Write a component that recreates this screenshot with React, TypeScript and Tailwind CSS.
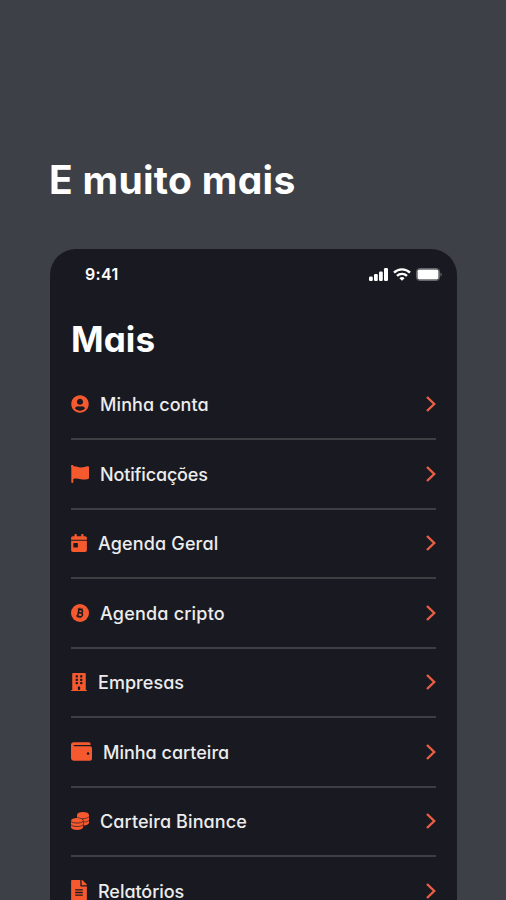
import clsx from "clsx"
import type { IconType } from "react-icons"
import {
  FaBuilding,
  FaCalendarDay,
  FaFileAlt,
  FaUserCircle,
  FaWallet,
} from "react-icons/fa"

type IconProps = { className?: string }

function FlagIcon({ className }: IconProps) {
  return (
    <svg className={className} viewBox="0 0 18 18" fill="currentColor">
      <path d="M0 1.2C0 .5.5 0 1.2 0c.8 0 1.2.5 1.3 1.2C5 .9 7 2.300 9.500 2.500c3 .1 5-.8 7.200-1.200.8-.2 1.300.2 1.300.9v10.800c0 .5-.3.8-.8.9-2.500.5-4.500.9-7.200.4-3-.6-5-1.100-7.700-.4v3.200c0 .5-.4.900-.9.900h-.2c-.5 0-.9-.4-.9-.9V2.500C.2 2.200 0 1.800 0 1.200Z" />
    </svg>
  )
}

function BitcoinIcon({ className }: IconProps) {
  return (
    <svg className={className} viewBox="0 0 18 18" fill="none">
      <circle cx="9" cy="9" r="9" fill="currentColor" />
      <g stroke="#191a21" strokeWidth="1.5" transform="rotate(12 9 9)">
        <path d="M6 5.500h3.500a1.600 1.600 0 0 1 0 3.300H7.300h2.700a1.800 1.800 0 0 1 0 3.700H6M7.300 5.500v7" />
        <path d="M8 3.800v1.700M10 3.800v1.700M8 12.500v1.700M10 12.500v1.700" strokeWidth="1" />
      </g>
    </svg>
  )
}

function CoinsIcon({ className }: IconProps) {
  return (
    <svg className={className} viewBox="0 0 18 18">
      <path d="M6 3v10.500h8c2.500-.5 4-1.500 4-2.700V3Z" fill="currentColor" />
      <ellipse cx="12" cy="2.900" rx="6" ry="2.900" fill="currentColor" />
      <path d="M11 6.500c3.500.2 6-.6 7-1.800M12.500 10.100c2.500-.1 4.500-.7 5.500-1.700" fill="none" stroke="#191a21" strokeWidth=".6" />
      <path d="M-.4 8.500c0-1.800 2.800-3.100 6.400-3.100s6.600 1.300 6.600 3.100V18h-13Z" fill="#191a21" />
      <path d="M0 8.800C0 7.100 2.700 5.900 6 5.900s6.100 1.200 6.100 2.900v6.300C12.100 16.800 9.300 18 6 18s-6-1.200-6-2.900Z" fill="currentColor" />
      <path d="M0 9.400c2 2.200 10 2.200 12 0M0 12.900c2 2.200 10 2.200 12 0" fill="none" stroke="#191a21" strokeWidth=".7" />
    </svg>
  )
}

type MenuItem = {
  label: string
  icon: IconType | typeof FlagIcon
  iconClass: string
  labelClass: string
}

const items: MenuItem[] = [
  { label: "Minha conta", icon: FaUserCircle, iconClass: "w-[18px] h-[18px]", labelClass: "tracking-[0.1px]" },
  { label: "Notificações", icon: FlagIcon, iconClass: "w-[18px] h-[18px]", labelClass: "tracking-[-0.15px]" },
  { label: "Agenda Geral", icon: FaCalendarDay, iconClass: "w-4 h-[18px]", labelClass: "tracking-[0.15px]" },
  { label: "Agenda cripto", icon: BitcoinIcon, iconClass: "w-[18px] h-[18px]", labelClass: "tracking-[0.2px]" },
  { label: "Empresas", icon: FaBuilding, iconClass: "w-4 h-[18px]", labelClass: "tracking-[0.05px]" },
  { label: "Minha carteira", icon: FaWallet, iconClass: "w-[21px] h-[21px]", labelClass: "" },
  { label: "Carteira Binance", icon: CoinsIcon, iconClass: "w-[18px] h-[18px]", labelClass: "tracking-[0.1px]" },
  { label: "Relatórios", icon: FaFileAlt, iconClass: "w-4 h-[21px]", labelClass: "-tracking-[0.05px]" },
]

function StatusBar() {
  return (
    <div className="flex h-[50px] items-center justify-between pl-[35px] pr-[15px] text-white">
      <span className="text-[16px] font-semibold leading-none tracking-[0.3px]">9:41</span>
      <div className="flex items-center gap-[5px]">
        <svg className="h-[13px] w-[19px]" viewBox="0 0 19 13" fill="currentColor">
          <rect x="0" y="8.5" width="3.8" height="4.5" rx="1.2" />
          <rect x="5" y="6" width="3.8" height="7" rx="1.2" />
          <rect x="10" y="3.5" width="3.8" height="9.5" rx="1.2" />
          <rect x="15" y="0" width="4" height="13" rx="1.2" />
        </svg>
        <svg className="h-[13px] w-[18px]" viewBox="0 0 18 13" fill="none" stroke="currentColor" strokeWidth="2.4">
          <path d="M1 4.6a11.5 11.5 0 0 1 16 0" />
          <path d="M4 7.9a7.2 7.2 0 0 1 10 0" />
          <path d="M9 12.8 6.4 10.2a3.8 3.8 0 0 1 5.2 0Z" fill="currentColor" stroke="none" />
        </svg>
        <svg className="h-[13px] w-[26px]" viewBox="0 0 26 13" fill="none">
          <rect x="0.5" y="0.5" width="23" height="12" rx="3" stroke="#66666c" />
          <rect x="1.5" y="1.5" width="21" height="10" rx="1.8" fill="currentColor" />
          <path d="M24.5 4.500v4q1.300-.6 1.300-2t-1.300-2Z" fill="#66666c" />
        </svg>
      </div>
    </div>
  )
}

function MenuRow({ label, icon: Icon, iconClass, labelClass }: MenuItem) {
  return (
    <li className="flex h-[69.5px] shrink-0 items-center border-b-2 border-[#3e3e43]">
      <Icon className={clsx("shrink-0 text-[#f7592f]", iconClass)} />
      <span className={clsx("ml-[11px] whitespace-nowrap pt-0.5 text-[18px] font-[450] leading-none text-[#ececed]", labelClass)}>
        {label}
      </span>
      <svg className="ml-auto h-4 w-[10px]" viewBox="0 0 10 16" fill="none" stroke="#e95f43" strokeWidth="2.4">
        <path d="m1 1 7.2 7L1 15" />
      </svg>
    </li>
  )
}

export default function App() {
  return (
    <main className="flex h-[900px] w-[506px] flex-col overflow-hidden bg-[#3e4048] px-[50px] font-['Inter',sans-serif] [font-feature-settings:'cv11']">
      <h1 className="-ml-px mt-[160px] h-[40px] whitespace-nowrap text-[39px] font-[650] leading-[40px] tracking-[0.3px] text-white">
        E muito mais
      </h1>

      <section className="mt-[49px] h-[651px] w-[407px] shrink-0 overflow-hidden rounded-t-[26px] bg-[#191a21]">
        <StatusBar />
        <div className="px-[21px]">
          <h2 className="mt-5 h-[51.5px] text-[35px] font-[650] leading-[41px] tracking-[0.1px] text-white">Mais</h2>
          <ul className="flex flex-col">
            {items.map((item) => (
              <MenuRow key={item.label} {...item} />
            ))}
          </ul>
        </div>
      </section>
    </main>
  )
}
